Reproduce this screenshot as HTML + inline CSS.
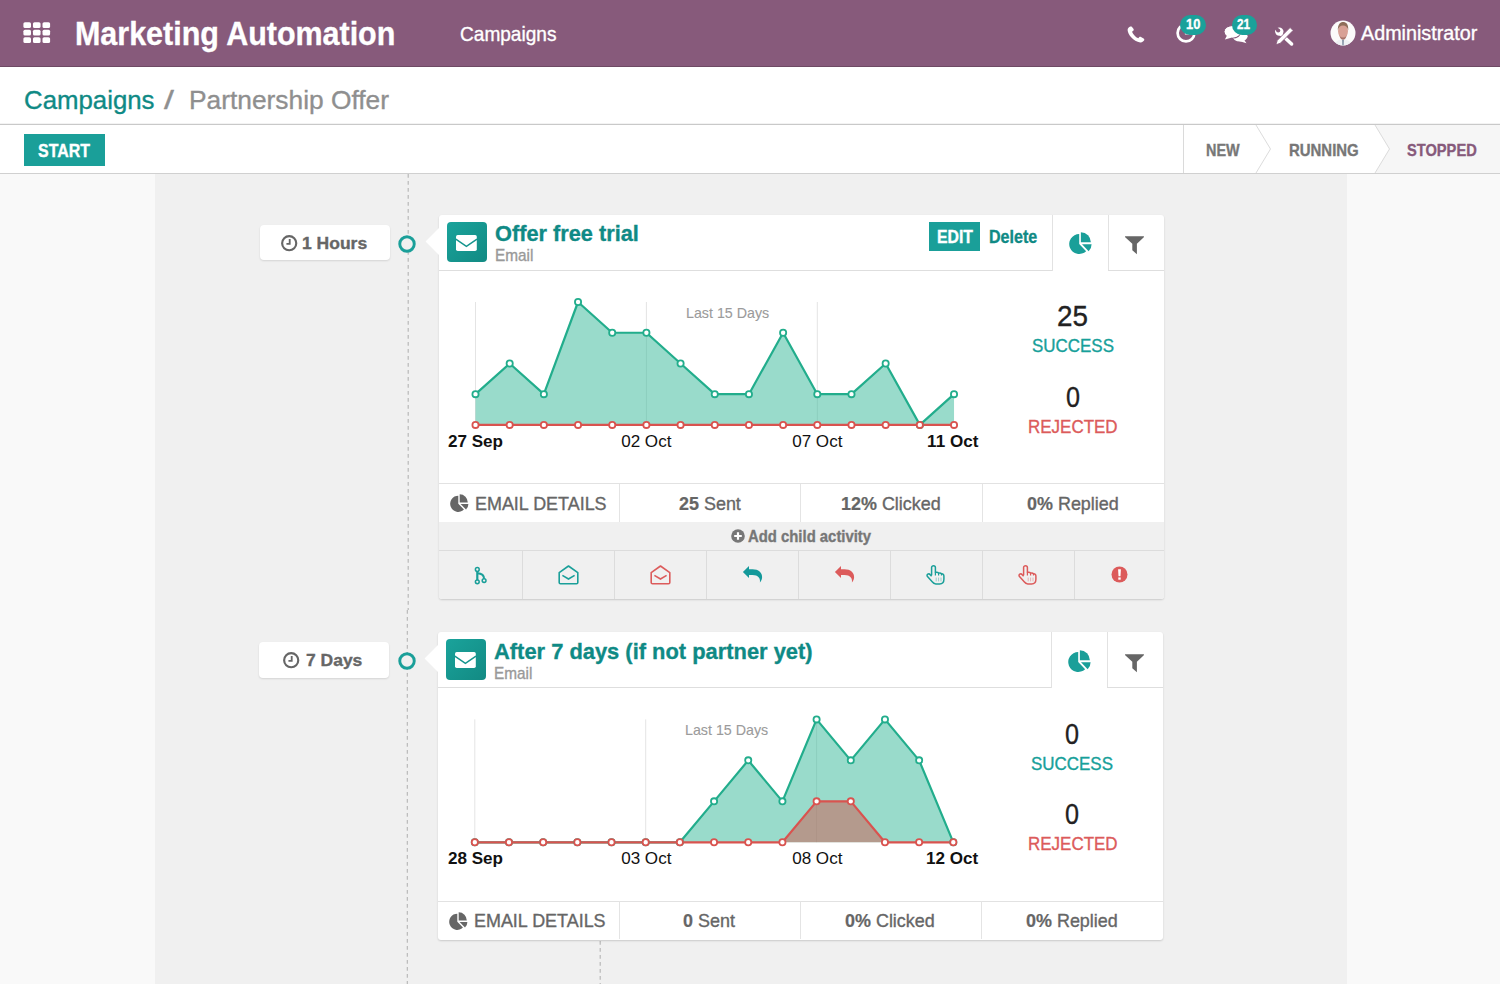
<!DOCTYPE html>
<html><head><meta charset="utf-8">
<style>
html,body{margin:0;padding:0;width:1500px;height:984px;overflow:hidden;background:#fff;}
body{position:relative;font-family:"Liberation Sans",sans-serif;}
.t{position:absolute;white-space:nowrap;-webkit-text-stroke:0.35px currentColor;}
.t b{-webkit-text-stroke:0.2px currentColor;}
.r{position:absolute;box-sizing:border-box;}
svg{position:absolute;overflow:visible;}
</style></head><body>

<div class="r" style="left:0.00px;top:0.00px;width:1500.00px;height:67.00px;background:#875a7b;border-bottom:1px solid #6e4a64;"></div>
<div class="r" style="left:0.00px;top:123.00px;width:1500.00px;height:1.00px;background:#f3f3f3;"></div>
<div class="r" style="left:0.00px;top:124.00px;width:1500.00px;height:1.00px;background:#c9c9c9;"></div>
<div class="r" style="left:0.00px;top:173.00px;width:1500.00px;height:1.00px;background:#d0d0d0;"></div>
<div class="r" style="left:0.00px;top:174.00px;width:1500.00px;height:810.00px;background:#f9f9f9;"></div>
<div class="r" style="left:155.00px;top:174.00px;width:1192.00px;height:810.00px;background:#f0f0f0;"></div>
<svg style="left:23px;top:21.5px" width="28" height="22" viewBox="0 0 28 22"><rect x="0.40" y="0.20" width="7.6" height="5.9" rx="1.6" fill="#fff"/><rect x="9.95" y="0.20" width="7.6" height="5.9" rx="1.6" fill="#fff"/><rect x="19.50" y="0.20" width="7.6" height="5.9" rx="1.6" fill="#fff"/><rect x="0.40" y="7.70" width="7.6" height="5.9" rx="1.6" fill="#fff"/><rect x="9.95" y="7.70" width="7.6" height="5.9" rx="1.6" fill="#fff"/><rect x="19.50" y="7.70" width="7.6" height="5.9" rx="1.6" fill="#fff"/><rect x="0.40" y="15.20" width="7.6" height="5.9" rx="1.6" fill="#fff"/><rect x="9.95" y="15.20" width="7.6" height="5.9" rx="1.6" fill="#fff"/><rect x="19.50" y="15.20" width="7.6" height="5.9" rx="1.6" fill="#fff"/></svg>
<div class="t" style="left:74.50px;top:17.20px;font-size:33.20px;line-height:33.20px;color:#fff;font-weight:bold;transform:scaleX(0.9176);transform-origin:0 0;">Marketing Automation</div>
<div class="t" style="left:459.50px;top:24.40px;font-size:20.20px;line-height:20.20px;color:#fff;font-weight:normal;transform:scaleX(0.9446);transform-origin:0 0;">Campaigns</div>
<svg style="left:1126.8px;top:25.5px" width="18" height="17" viewBox="0 0 18 17"><path d="M3.2 0.6 C2.2 0.9 0.6 2.2 0.6 4.1 C0.8 8.6 6.4 15.6 13.2 16.4 C15.2 16.6 16.9 15.1 17.3 14.0 C17.5 13.4 17.2 12.9 16.6 12.5 L14.0 10.9 C13.4 10.5 12.7 10.6 12.3 11.1 L11.3 12.3 C8.4 11.0 6.2 8.4 5.0 5.7 L6.3 4.7 C6.8 4.3 6.9 3.6 6.6 3.0 L5.0 0.9 C4.6 0.5 3.9 0.4 3.2 0.6 Z" fill="#fff"/></svg>
<svg style="left:1175px;top:22px" width="22" height="22" viewBox="0 0 22 22"><circle cx="11" cy="11" r="8.4" fill="none" stroke="#fff" stroke-width="2.7"/><path d="M11 6 V11.4 H14.5" fill="none" stroke="#fff" stroke-width="2.2"/></svg>
<div class="r" style="left:1180.00px;top:14.60px;width:26.00px;height:20.40px;background:#1aa19a;border-radius:10.2px;"></div>
<div class="t" style="left:1186.00px;top:17.45px;font-size:14.00px;line-height:14.00px;color:#fff;font-weight:bold;transform:scaleX(0.9181);transform-origin:0 0;">10</div>
<svg style="left:1224px;top:24px" width="25" height="20" viewBox="0 0 25 20"><ellipse cx="16" cy="12.2" rx="7.6" ry="5.4" fill="#fff"/><path d="M19.5 15 L22.5 19.2 L15 17 Z" fill="#fff"/><ellipse cx="8.5" cy="7.8" rx="8.4" ry="6.2" fill="#fff" stroke="#875a7b" stroke-width="1.1"/><path d="M3 11.5 L0.9 15.6 L8 13.5 Z" fill="#fff"/><ellipse cx="8.5" cy="7.8" rx="7.85" ry="5.65" fill="#fff"/></svg>
<div class="r" style="left:1232.00px;top:14.60px;width:25.00px;height:20.40px;background:#1aa19a;border-radius:10.2px;"></div>
<div class="t" style="left:1237.00px;top:17.45px;font-size:14.00px;line-height:14.00px;color:#fff;font-weight:bold;transform:scaleX(0.8347);transform-origin:0 0;">21</div>
<svg style="left:1270px;top:22px" width="30" height="28" viewBox="0 0 30 28"><path d="M9.8 11 L21.6 22" stroke="#fff" stroke-width="3.5" stroke-linecap="round"/><circle cx="9.3" cy="9.6" r="4.2" fill="#fff"/><circle cx="8.2" cy="8.5" r="2.1" fill="#875a7b"/><path d="M9 7.1 L4.4 2.5 L2.2 4.7 L6.8 9.3 Z" fill="#875a7b"/><path d="M5.8 22.8 L7.3 18.3 L20.1 5.5 L23.1 8.5 L10.3 21.3 Z" fill="#fff" stroke="#875a7b" stroke-width="0.9"/></svg>
<svg style="left:1330px;top:20px" width="26" height="26" viewBox="0 0 26 26"><defs><clipPath id="av"><circle cx="13" cy="13" r="12.5"/></clipPath></defs><circle cx="13" cy="13" r="12.5" fill="#fbfafa"/><g clip-path="url(#av)"><path d="M4 26 C5 21 9 19.5 13 19.5 C17 19.5 21 21 22 26 Z" fill="#eef0f3"/><path d="M9.2 15 C10 18.6 11.5 19.8 13 19.8 C14.6 19.8 16 18.6 16.8 15 Z" fill="#a8746a"/><ellipse cx="13" cy="11" rx="5" ry="6.6" fill="#d8a196"/><path d="M7.9 10.5 C7.4 4.5 10.4 2 13 2 C16 2 18.8 4 18.2 10.5 C17.6 7.4 15.8 5.6 13 5.6 C10.3 5.6 8.5 7.4 7.9 10.5 Z" fill="#8e6e5a"/><path d="M12 19.8 L14 19.8 L13.7 26 L12.3 26 Z" fill="#8a98aa"/></g></svg>
<div class="t" style="left:1360.80px;top:24.49px;font-size:19.50px;line-height:19.50px;color:#fff;font-weight:normal;transform:scaleX(1.0117);transform-origin:0 0;">Administrator</div>
<div class="t" style="left:24.40px;top:86.57px;font-size:26.50px;line-height:26.50px;color:#0f8a85;font-weight:normal;transform:scaleX(0.9737);transform-origin:0 0;">Campaigns</div>
<div class="t" style="left:164.00px;top:86.57px;font-size:26.50px;line-height:26.50px;color:#8f8f8f;font-weight:normal;transform:scaleX(1.3477);transform-origin:0 0;">/</div>
<div class="t" style="left:189.00px;top:86.57px;font-size:26.50px;line-height:26.50px;color:#8f8f8f;font-weight:normal;transform:scaleX(0.9934);transform-origin:0 0;">Partnership Offer</div>
<div class="r" style="left:24.00px;top:134.00px;width:81.00px;height:32.00px;background:#1a9f99;"></div>
<div class="t" style="left:38.00px;top:141.59px;font-size:18.20px;line-height:18.20px;color:#fff;font-weight:bold;transform:scaleX(0.8764);transform-origin:0 0;">START</div>
<svg style="left:1183px;top:125px" width="317" height="48" viewBox="0 0 317 48"><path d="M192 0 L317 0 L317 48 L192 48 L206 24 Z" fill="#f6f6f6"/><path d="M0.5 0 V48" stroke="#dadada" stroke-width="1"/><path d="M73 0 L87.5 24 L73 48" fill="none" stroke="#dcdcdc" stroke-width="1"/><path d="M192 0 L206.5 24 L192 48" fill="none" stroke="#dcdcdc" stroke-width="1"/></svg>
<div class="t" style="left:1206.30px;top:141.50px;font-size:16.30px;line-height:16.30px;color:#777;font-weight:bold;transform:scaleX(0.8854);transform-origin:0 0;">NEW</div>
<div class="t" style="left:1288.80px;top:141.50px;font-size:16.30px;line-height:16.30px;color:#777;font-weight:bold;transform:scaleX(0.9175);transform-origin:0 0;">RUNNING</div>
<div class="t" style="left:1407.20px;top:141.50px;font-size:16.30px;line-height:16.30px;color:#875a7b;font-weight:bold;transform:scaleX(0.8996);transform-origin:0 0;">STOPPED</div>
<svg style="left:0;top:0" width="1500" height="984"><path d="M408.2 174 V610" stroke="#b4b4b4" stroke-width="1.1" stroke-dasharray="3.8 3.2"/><path d="M407.3 610 V984" stroke="#b4b4b4" stroke-width="1.1" stroke-dasharray="3.8 3.2"/><path d="M600.2 941 V984" stroke="#b4b4b4" stroke-width="1.1" stroke-dasharray="3.8 3.2"/></svg>
<div class="r" style="left:260.00px;top:225.00px;width:130.00px;height:35.20px;background:#fff;border-radius:4px;box-shadow:0 1px 2px rgba(0,0,0,0.12);"></div>
<svg style="left:280.60px;top:234.90px" width="16.40" height="16.40" viewBox="0 0 16 16"><circle cx="8" cy="8" r="6.9" fill="none" stroke="#666" stroke-width="2.1"/><path d="M8.5 3.9 V8.6 H5.3" fill="none" stroke="#666" stroke-width="1.8"/></svg>
<div class="t" style="left:302.40px;top:234.56px;font-size:17.30px;line-height:17.30px;color:#666;font-weight:bold;transform:scaleX(1.0124);transform-origin:0 0;">1 Hours</div>
<svg style="left:397.30px;top:233.60px" width="20" height="20" viewBox="0 0 20 20"><circle cx="10" cy="10" r="7.25" fill="#f0f0f0" stroke="#1a9f99" stroke-width="2.9"/></svg>
<div class="r" style="left:439.00px;top:215.00px;width:725.00px;height:384.00px;background:#fff;border-radius:3px;box-shadow:0 1px 2px rgba(0,0,0,0.16);"></div>
<svg style="left:425.00px;top:228.00px" width="16" height="30" viewBox="0 0 16 30"><path d="M14 0 L0.6 13.5 L14 27 Z" fill="#fff"/></svg>
<div class="r" style="left:439.00px;top:269.60px;width:613.00px;height:1.00px;background:#dedede;"></div>
<div class="r" style="left:1052.00px;top:215.00px;width:1.00px;height:55.60px;background:#e2e2e2;"></div>
<div class="r" style="left:1108.00px;top:215.00px;width:1.00px;height:55.60px;background:#e2e2e2;"></div>
<div class="r" style="left:1108.00px;top:269.60px;width:56.00px;height:1.00px;background:#dedede;"></div>
<div class="r" style="left:447.00px;top:222.00px;width:40px;height:40.3px;border-radius:4px;background:linear-gradient(135deg,#1aa39b,#128a83);"></div><svg style="left:456.00px;top:234.80px" width="21" height="17" viewBox="0 0 21 17"><rect x="0" y="0" width="20.8" height="16" rx="1.7" fill="#fff"/><path d="M-0.2 4.2 L10.4 11.3 L21 4.2" fill="none" stroke="#16958e" stroke-width="1.5"/></svg>
<div class="t" style="left:494.50px;top:223.15px;font-size:22.50px;line-height:22.50px;color:#0f8a85;font-weight:bold;transform:scaleX(0.9665);transform-origin:0 0;">Offer free trial</div>
<div class="t" style="left:494.80px;top:247.19px;font-size:16.20px;line-height:16.20px;color:#999;font-weight:normal;transform:scaleX(0.9481);transform-origin:0 0;">Email</div>
<div class="r" style="left:929.30px;top:222.00px;width:51.00px;height:29.00px;background:#1a9f99;"></div>
<div class="t" style="left:937.00px;top:228.72px;font-size:17.70px;line-height:17.70px;color:#fff;font-weight:bold;transform:scaleX(0.8930);transform-origin:0 0;">EDIT</div>
<div class="t" style="left:988.70px;top:228.72px;font-size:17.70px;line-height:17.70px;color:#0f8a85;font-weight:bold;transform:scaleX(0.9070);transform-origin:0 0;">Delete</div>
<svg style="left:1069.00px;top:232.40px" width="22.00" height="22.00" viewBox="0 0 22 22"><path d="M10.2 12 L10.2 2 A10 10 0 1 0 17.15 19.2 Z" fill="#1a9f99"/><path d="M11.9 10.3 V0.3 A10 10 0 0 1 21.9 10.3 Z" fill="#1a9f99"/><path d="M13 12.3 H22.6 A9.6 9.6 0 0 1 19.67 19.2 Z" fill="#1a9f99"/></svg>
<svg style="left:1125.40px;top:236.20px" width="20" height="19" viewBox="0 0 20 19"><path d="M0.6 0.2 H18.4 C19 0.2 19.2 0.8 18.8 1.2 L11.9 7.8 V18.2 L7.3 14.2 V7.8 L0.2 1.2 C-0.2 0.8 0 0.2 0.6 0.2 Z" fill="#666"/></svg>
<svg style="left:0;top:0" width="1500" height="984"><path d="M475.50 302.00 V424.90" stroke="#e4e4e4" stroke-width="1"/><path d="M646.40 302.00 V424.90" stroke="#e4e4e4" stroke-width="1"/><path d="M817.30 302.00 V424.90" stroke="#e4e4e4" stroke-width="1"/><polygon points="475.50,394.17 509.68,363.45 543.86,394.17 578.04,302.00 612.22,332.73 646.40,332.73 680.58,363.45 714.76,394.17 748.94,394.17 783.12,332.73 817.30,394.17 851.48,394.17 885.66,363.45 919.84,424.90 954.02,394.17 954.02,424.90 475.50,424.90" fill="rgba(52,183,152,0.5)"/><polygon points="475.50,424.90 509.68,424.90 543.86,424.90 578.04,424.90 612.22,424.90 646.40,424.90 680.58,424.90 714.76,424.90 748.94,424.90 783.12,424.90 817.30,424.90 851.48,424.90 885.66,424.90 919.84,424.90 954.02,424.90 954.02,424.90 475.50,424.90" fill="rgba(207,90,80,0.5)"/><polyline points="475.50,394.17 509.68,363.45 543.86,394.17 578.04,302.00 612.22,332.73 646.40,332.73 680.58,363.45 714.76,394.17 748.94,394.17 783.12,332.73 817.30,394.17 851.48,394.17 885.66,363.45 919.84,424.90 954.02,394.17" fill="none" stroke="#22ad8c" stroke-width="2.2" stroke-linejoin="round"/><polyline points="475.50,424.90 509.68,424.90 543.86,424.90 578.04,424.90 612.22,424.90 646.40,424.90 680.58,424.90 714.76,424.90 748.94,424.90 783.12,424.90 817.30,424.90 851.48,424.90 885.66,424.90 919.84,424.90 954.02,424.90" fill="none" stroke="#d9534f" stroke-width="2.2" stroke-linejoin="round"/><circle cx="475.50" cy="394.17" r="3.1" fill="#fff" stroke="#22ad8c" stroke-width="1.8"/><circle cx="509.68" cy="363.45" r="3.1" fill="#fff" stroke="#22ad8c" stroke-width="1.8"/><circle cx="543.86" cy="394.17" r="3.1" fill="#fff" stroke="#22ad8c" stroke-width="1.8"/><circle cx="578.04" cy="302.00" r="3.1" fill="#fff" stroke="#22ad8c" stroke-width="1.8"/><circle cx="612.22" cy="332.73" r="3.1" fill="#fff" stroke="#22ad8c" stroke-width="1.8"/><circle cx="646.40" cy="332.73" r="3.1" fill="#fff" stroke="#22ad8c" stroke-width="1.8"/><circle cx="680.58" cy="363.45" r="3.1" fill="#fff" stroke="#22ad8c" stroke-width="1.8"/><circle cx="714.76" cy="394.17" r="3.1" fill="#fff" stroke="#22ad8c" stroke-width="1.8"/><circle cx="748.94" cy="394.17" r="3.1" fill="#fff" stroke="#22ad8c" stroke-width="1.8"/><circle cx="783.12" cy="332.73" r="3.1" fill="#fff" stroke="#22ad8c" stroke-width="1.8"/><circle cx="817.30" cy="394.17" r="3.1" fill="#fff" stroke="#22ad8c" stroke-width="1.8"/><circle cx="851.48" cy="394.17" r="3.1" fill="#fff" stroke="#22ad8c" stroke-width="1.8"/><circle cx="885.66" cy="363.45" r="3.1" fill="#fff" stroke="#22ad8c" stroke-width="1.8"/><circle cx="919.84" cy="424.90" r="3.1" fill="#fff" stroke="#22ad8c" stroke-width="1.8"/><circle cx="954.02" cy="394.17" r="3.1" fill="#fff" stroke="#22ad8c" stroke-width="1.8"/><circle cx="475.50" cy="424.90" r="3.1" fill="#fff" stroke="#d9534f" stroke-width="1.8"/><circle cx="509.68" cy="424.90" r="3.1" fill="#fff" stroke="#d9534f" stroke-width="1.8"/><circle cx="543.86" cy="424.90" r="3.1" fill="#fff" stroke="#d9534f" stroke-width="1.8"/><circle cx="578.04" cy="424.90" r="3.1" fill="#fff" stroke="#d9534f" stroke-width="1.8"/><circle cx="612.22" cy="424.90" r="3.1" fill="#fff" stroke="#d9534f" stroke-width="1.8"/><circle cx="646.40" cy="424.90" r="3.1" fill="#fff" stroke="#d9534f" stroke-width="1.8"/><circle cx="680.58" cy="424.90" r="3.1" fill="#fff" stroke="#d9534f" stroke-width="1.8"/><circle cx="714.76" cy="424.90" r="3.1" fill="#fff" stroke="#d9534f" stroke-width="1.8"/><circle cx="748.94" cy="424.90" r="3.1" fill="#fff" stroke="#d9534f" stroke-width="1.8"/><circle cx="783.12" cy="424.90" r="3.1" fill="#fff" stroke="#d9534f" stroke-width="1.8"/><circle cx="817.30" cy="424.90" r="3.1" fill="#fff" stroke="#d9534f" stroke-width="1.8"/><circle cx="851.48" cy="424.90" r="3.1" fill="#fff" stroke="#d9534f" stroke-width="1.8"/><circle cx="885.66" cy="424.90" r="3.1" fill="#fff" stroke="#d9534f" stroke-width="1.8"/><circle cx="919.84" cy="424.90" r="3.1" fill="#fff" stroke="#d9534f" stroke-width="1.8"/><circle cx="954.02" cy="424.90" r="3.1" fill="#fff" stroke="#d9534f" stroke-width="1.8"/></svg>
<div class="t" style="left:685.90px;top:305.71px;font-size:14.40px;line-height:14.40px;color:#9b9b9b;font-weight:normal;transform:scaleX(0.9898);transform-origin:0 0;-webkit-text-stroke:0.1px #9b9b9b;">Last 15 Days</div>
<div class="t" style="left:450.32px;top:433.63px;font-size:15.80px;line-height:15.80px;color:#111;font-weight:bold;transform:scaleX(1.08);transform-origin:50% 0;-webkit-text-stroke:0;">27 Sep</div>
<div class="t" style="left:623.43px;top:433.63px;font-size:15.80px;line-height:15.80px;color:#111;font-weight:normal;transform:scaleX(1.08);transform-origin:50% 0;-webkit-text-stroke:0;">02 Oct</div>
<div class="t" style="left:794.33px;top:433.63px;font-size:15.80px;line-height:15.80px;color:#111;font-weight:normal;transform:scaleX(1.08);transform-origin:50% 0;-webkit-text-stroke:0;">07 Oct</div>
<div class="t" style="left:929.30px;top:433.63px;font-size:15.80px;line-height:15.80px;color:#111;font-weight:bold;transform:scaleX(1.08);transform-origin:50% 0;-webkit-text-stroke:0;">11 Oct</div>
<div class="t" style="left:1057.00px;top:301.14px;font-size:30.20px;line-height:30.20px;color:#222;font-weight:normal;transform:scaleX(0.9227);transform-origin:0 0;">25</div>
<div class="t" style="left:1032.00px;top:338.25px;font-size:17.90px;line-height:17.90px;color:#17a09a;font-weight:normal;transform:scaleX(0.9475);transform-origin:0 0;">SUCCESS</div>
<div class="t" style="left:1066.00px;top:381.84px;font-size:30.20px;line-height:30.20px;color:#222;font-weight:normal;transform:scaleX(0.8353);transform-origin:0 0;">0</div>
<div class="t" style="left:1028.40px;top:418.95px;font-size:17.90px;line-height:17.90px;color:#dc5b5b;font-weight:normal;transform:scaleX(0.9485);transform-origin:0 0;">REJECTED</div>
<div class="r" style="left:439.00px;top:483.40px;width:725.00px;height:1.00px;background:#e2e2e2;"></div>
<div class="r" style="left:619.20px;top:484.00px;width:1.00px;height:38.00px;background:#e4e4e4;"></div>
<div class="r" style="left:800.30px;top:484.00px;width:1.00px;height:38.00px;background:#e4e4e4;"></div>
<div class="r" style="left:982.00px;top:484.00px;width:1.00px;height:38.00px;background:#e4e4e4;"></div>
<svg style="left:450.00px;top:494.40px" width="17.90" height="17.90" viewBox="0 0 22 22"><path d="M10.2 12 L10.2 2 A10 10 0 1 0 17.15 19.2 Z" fill="#666"/><path d="M11.9 10.3 V0.3 A10 10 0 0 1 21.9 10.3 Z" fill="#666"/><path d="M13 12.3 H22.6 A9.6 9.6 0 0 1 19.67 19.2 Z" fill="#666"/></svg>
<div class="t" style="left:474.80px;top:494.66px;font-size:18.60px;line-height:18.60px;color:#666;font-weight:normal;transform:scaleX(0.9646);transform-origin:0 0;">EMAIL DETAILS</div>
<div class="t" style="left:678.66px;top:494.56px;font-size:18.60px;line-height:18.60px;color:#666;font-weight:normal;transform:scaleX(0.9650);transform-origin:0 0;"><b>25</b> Sent</div>
<div class="t" style="left:841.11px;top:494.56px;font-size:18.60px;line-height:18.60px;color:#666;font-weight:normal;transform:scaleX(0.9650);transform-origin:0 0;"><b>12%</b> Clicked</div>
<div class="t" style="left:1026.59px;top:494.56px;font-size:18.60px;line-height:18.60px;color:#666;font-weight:normal;transform:scaleX(0.9650);transform-origin:0 0;"><b>0%</b> Replied</div>
<div class="r" style="left:439.00px;top:522.00px;width:725.00px;height:77.00px;background:#f0f0f0;border-radius:0 0 3px 3px;"></div>
<div class="r" style="left:439.00px;top:550.00px;width:725.00px;height:1.00px;background:#dcdcdc;"></div>
<svg style="left:730.50px;top:529.40px" width="14" height="14" viewBox="0 0 14 14"><circle cx="7" cy="7" r="6.8" fill="#777"/><path d="M7 3.2 V10.8 M3.2 7 H10.8" stroke="#fff" stroke-width="2.2"/></svg>
<div class="t" style="left:748.30px;top:528.53px;font-size:15.80px;line-height:15.80px;color:#777;font-weight:bold;transform:scaleX(0.9410);transform-origin:0 0;">Add child activity</div>
<div class="r" style="left:521.50px;top:551.00px;width:1.00px;height:48.00px;background:#dcdcdc;"></div>
<div class="r" style="left:614.00px;top:551.00px;width:1.00px;height:48.00px;background:#dcdcdc;"></div>
<div class="r" style="left:706.40px;top:551.00px;width:1.00px;height:48.00px;background:#dcdcdc;"></div>
<div class="r" style="left:798.00px;top:551.00px;width:1.00px;height:48.00px;background:#dcdcdc;"></div>
<div class="r" style="left:890.40px;top:551.00px;width:1.00px;height:48.00px;background:#dcdcdc;"></div>
<div class="r" style="left:982.00px;top:551.00px;width:1.00px;height:48.00px;background:#dcdcdc;"></div>
<div class="r" style="left:1074.00px;top:551.00px;width:1.00px;height:48.00px;background:#dcdcdc;"></div>
<svg style="left:474.00px;top:566.50px" width="13" height="18" viewBox="0 0 13 18"><path d="M3.3 4 V13" stroke="#1a9f99" stroke-width="2.2" fill="none"/><path d="M3.3 6.2 C7.6 6.4 10.1 8.6 10.1 11.8" stroke="#1a9f99" stroke-width="2" fill="none"/><circle cx="3.3" cy="2.5" r="1.9" fill="#f0f0f0" stroke="#1a9f99" stroke-width="1.5"/><circle cx="3.3" cy="14.8" r="1.9" fill="#f0f0f0" stroke="#1a9f99" stroke-width="1.5"/><circle cx="10.1" cy="13.6" r="1.9" fill="#f0f0f0" stroke="#1a9f99" stroke-width="1.5"/></svg>
<svg style="left:558.00px;top:564.50px" width="21" height="20" viewBox="0 0 21 20"><path d="M1.2 7.6 L10.5 1 L19.8 7.6 V17.4 C19.8 18.2 19.3 18.7 18.5 18.7 H2.5 C1.7 18.7 1.2 18.2 1.2 17.4 Z" fill="none" stroke="#1a9f99" stroke-width="1.6" stroke-linejoin="round"/><path d="M4.4 10.4 L10.5 14 L16.6 10.4" fill="none" stroke="#1a9f99" stroke-width="1.6"/></svg>
<svg style="left:650.00px;top:564.50px" width="21" height="20" viewBox="0 0 21 20"><path d="M1.2 7.6 L10.5 1 L19.8 7.6 V17.4 C19.8 18.2 19.3 18.7 18.5 18.7 H2.5 C1.7 18.7 1.2 18.2 1.2 17.4 Z" fill="none" stroke="#dc5b5b" stroke-width="1.6" stroke-linejoin="round"/><path d="M4.4 10.4 L10.5 14 L16.6 10.4" fill="none" stroke="#dc5b5b" stroke-width="1.6"/></svg>
<svg style="left:742.00px;top:565.00px" width="22" height="19" viewBox="0 0 22 19"><path d="M0.9 7 L7 1.1 V4.2 H10.5 C16.5 4.2 20.3 7.5 20.1 12.2 C20 14.5 19 16.3 17.9 17.6 C18.8 13.2 16 9.9 10.5 9.9 H7 V12.9 Z" fill="#14999a"/></svg>
<svg style="left:834.00px;top:565.00px" width="22" height="19" viewBox="0 0 22 19"><path d="M0.9 7 L7 1.1 V4.2 H10.5 C16.5 4.2 20.3 7.5 20.1 12.2 C20 14.5 19 16.3 17.9 17.6 C18.8 13.2 16 9.9 10.5 9.9 H7 V12.9 Z" fill="#dc5b5b"/></svg>
<svg style="left:926.00px;top:565.00px" width="19" height="20" viewBox="0 0 19 20"><path d="M5.6 10.2 V2.6 C5.6 1.4 6.5 0.7 7.5 0.7 C8.5 0.7 9.4 1.4 9.4 2.6 V7.4 C10.8 7.1 12 7.4 12.6 8.1 C13.8 7.7 15 8.1 15.5 8.9 C16.9 8.7 17.9 9.5 17.9 10.9 V14.2 C17.9 16.8 16.4 18.9 13.6 18.9 H9.8 C8.2 18.9 7.2 18.2 6.2 16.8 L1.5 11.5 C0.8 10.7 0.9 9.7 1.7 9.2 C2.5 8.7 3.6 8.9 4.2 9.7 L5.6 11.2" fill="none" stroke="#1a9f99" stroke-width="1.5" stroke-linejoin="round"/><path d="M12.6 8.1 V10.4 M15.5 8.9 V10.6 M9.4 7.4 V10.4" stroke="#1a9f99" stroke-width="1.2"/><path d="M10.2 12.6 V16.4 M12.6 12.6 V16.4 M15 12.6 V16.4" stroke="#1a9f99" stroke-width="0.9" opacity="0.45"/></svg>
<svg style="left:1018.00px;top:565.00px" width="19" height="20" viewBox="0 0 19 20"><path d="M5.6 10.2 V2.6 C5.6 1.4 6.5 0.7 7.5 0.7 C8.5 0.7 9.4 1.4 9.4 2.6 V7.4 C10.8 7.1 12 7.4 12.6 8.1 C13.8 7.7 15 8.1 15.5 8.9 C16.9 8.7 17.9 9.5 17.9 10.9 V14.2 C17.9 16.8 16.4 18.9 13.6 18.9 H9.8 C8.2 18.9 7.2 18.2 6.2 16.8 L1.5 11.5 C0.8 10.7 0.9 9.7 1.7 9.2 C2.5 8.7 3.6 8.9 4.2 9.7 L5.6 11.2" fill="none" stroke="#dc5b5b" stroke-width="1.5" stroke-linejoin="round"/><path d="M12.6 8.1 V10.4 M15.5 8.9 V10.6 M9.4 7.4 V10.4" stroke="#dc5b5b" stroke-width="1.2"/><path d="M10.2 12.6 V16.4 M12.6 12.6 V16.4 M15 12.6 V16.4" stroke="#dc5b5b" stroke-width="0.9" opacity="0.45"/></svg>
<svg style="left:1110.50px;top:566.00px" width="17" height="17" viewBox="0 0 17 17"><circle cx="8.5" cy="8.5" r="8" fill="#dc5b5b"/><path d="M7.1 3.2 H9.9 L9.5 10.2 H7.5 Z" fill="#fff"/><rect x="7.3" y="11.4" width="2.4" height="2.3" fill="#fff"/></svg>
<div class="r" style="left:259.30px;top:642.40px;width:130.00px;height:35.20px;background:#fff;border-radius:4px;box-shadow:0 1px 2px rgba(0,0,0,0.12);"></div>
<svg style="left:283.40px;top:652.30px" width="16.40" height="16.40" viewBox="0 0 16 16"><circle cx="8" cy="8" r="6.9" fill="none" stroke="#666" stroke-width="2.1"/><path d="M8.5 3.9 V8.6 H5.3" fill="none" stroke="#666" stroke-width="1.8"/></svg>
<div class="t" style="left:305.60px;top:651.96px;font-size:17.30px;line-height:17.30px;color:#666;font-weight:bold;transform:scaleX(1.0109);transform-origin:0 0;">7 Days</div>
<svg style="left:396.60px;top:651.00px" width="20" height="20" viewBox="0 0 20 20"><circle cx="10" cy="10" r="7.25" fill="#f0f0f0" stroke="#1a9f99" stroke-width="2.9"/></svg>
<div class="r" style="left:438.30px;top:632.40px;width:725.00px;height:307.20px;background:#fff;border-radius:3px;box-shadow:0 1px 2px rgba(0,0,0,0.16);"></div>
<svg style="left:424.30px;top:645.40px" width="16" height="30" viewBox="0 0 16 30"><path d="M14 0 L0.6 13.5 L14 27 Z" fill="#fff"/></svg>
<div class="r" style="left:438.30px;top:687.00px;width:613.00px;height:1.00px;background:#dedede;"></div>
<div class="r" style="left:1051.30px;top:632.40px;width:1.00px;height:55.60px;background:#e2e2e2;"></div>
<div class="r" style="left:1107.30px;top:632.40px;width:1.00px;height:55.60px;background:#e2e2e2;"></div>
<div class="r" style="left:1107.30px;top:687.00px;width:56.00px;height:1.00px;background:#dedede;"></div>
<div class="r" style="left:446.30px;top:639.40px;width:40px;height:40.3px;border-radius:4px;background:linear-gradient(135deg,#1aa39b,#128a83);"></div><svg style="left:455.30px;top:652.20px" width="21" height="17" viewBox="0 0 21 17"><rect x="0" y="0" width="20.8" height="16" rx="1.7" fill="#fff"/><path d="M-0.2 4.2 L10.4 11.3 L21 4.2" fill="none" stroke="#16958e" stroke-width="1.5"/></svg>
<div class="t" style="left:493.80px;top:640.55px;font-size:22.50px;line-height:22.50px;color:#0f8a85;font-weight:bold;transform:scaleX(0.9727);transform-origin:0 0;">After 7 days (if not partner yet)</div>
<div class="t" style="left:494.10px;top:664.59px;font-size:16.20px;line-height:16.20px;color:#999;font-weight:normal;transform:scaleX(0.9481);transform-origin:0 0;">Email</div>
<svg style="left:1068.30px;top:649.80px" width="22.00" height="22.00" viewBox="0 0 22 22"><path d="M10.2 12 L10.2 2 A10 10 0 1 0 17.15 19.2 Z" fill="#1a9f99"/><path d="M11.9 10.3 V0.3 A10 10 0 0 1 21.9 10.3 Z" fill="#1a9f99"/><path d="M13 12.3 H22.6 A9.6 9.6 0 0 1 19.67 19.2 Z" fill="#1a9f99"/></svg>
<svg style="left:1124.70px;top:653.60px" width="20" height="19" viewBox="0 0 20 19"><path d="M0.6 0.2 H18.4 C19 0.2 19.2 0.8 18.8 1.2 L11.9 7.8 V18.2 L7.3 14.2 V7.8 L0.2 1.2 C-0.2 0.8 0 0.2 0.6 0.2 Z" fill="#666"/></svg>
<svg style="left:0;top:0" width="1500" height="984"><path d="M474.80 719.40 V842.30" stroke="#e4e4e4" stroke-width="1"/><path d="M645.70 719.40 V842.30" stroke="#e4e4e4" stroke-width="1"/><path d="M816.60 719.40 V842.30" stroke="#e4e4e4" stroke-width="1"/><polygon points="474.80,842.30 508.98,842.30 543.16,842.30 577.34,842.30 611.52,842.30 645.70,842.30 679.88,842.30 714.06,801.33 748.24,760.37 782.42,801.33 816.60,719.40 850.78,760.37 884.96,719.40 919.14,760.37 953.32,842.30 953.32,842.30 474.80,842.30" fill="rgba(52,183,152,0.5)"/><polygon points="474.80,842.30 508.98,842.30 543.16,842.30 577.34,842.30 611.52,842.30 645.70,842.30 679.88,842.30 714.06,842.30 748.24,842.30 782.42,842.30 816.60,801.33 850.78,801.33 884.96,842.30 919.14,842.30 953.32,842.30 953.32,842.30 474.80,842.30" fill="rgba(207,90,80,0.5)"/><polyline points="474.80,842.30 508.98,842.30 543.16,842.30 577.34,842.30 611.52,842.30 645.70,842.30 679.88,842.30 714.06,801.33 748.24,760.37 782.42,801.33 816.60,719.40 850.78,760.37 884.96,719.40 919.14,760.37 953.32,842.30" fill="none" stroke="#22ad8c" stroke-width="2.2" stroke-linejoin="round"/><polyline points="474.80,842.30 508.98,842.30 543.16,842.30 577.34,842.30 611.52,842.30 645.70,842.30 679.88,842.30 714.06,842.30 748.24,842.30 782.42,842.30 816.60,801.33 850.78,801.33 884.96,842.30 919.14,842.30 953.32,842.30" fill="none" stroke="#d9534f" stroke-width="2.2" stroke-linejoin="round"/><circle cx="474.80" cy="842.30" r="3.1" fill="#fff" stroke="#22ad8c" stroke-width="1.8"/><circle cx="508.98" cy="842.30" r="3.1" fill="#fff" stroke="#22ad8c" stroke-width="1.8"/><circle cx="543.16" cy="842.30" r="3.1" fill="#fff" stroke="#22ad8c" stroke-width="1.8"/><circle cx="577.34" cy="842.30" r="3.1" fill="#fff" stroke="#22ad8c" stroke-width="1.8"/><circle cx="611.52" cy="842.30" r="3.1" fill="#fff" stroke="#22ad8c" stroke-width="1.8"/><circle cx="645.70" cy="842.30" r="3.1" fill="#fff" stroke="#22ad8c" stroke-width="1.8"/><circle cx="679.88" cy="842.30" r="3.1" fill="#fff" stroke="#22ad8c" stroke-width="1.8"/><circle cx="714.06" cy="801.33" r="3.1" fill="#fff" stroke="#22ad8c" stroke-width="1.8"/><circle cx="748.24" cy="760.37" r="3.1" fill="#fff" stroke="#22ad8c" stroke-width="1.8"/><circle cx="782.42" cy="801.33" r="3.1" fill="#fff" stroke="#22ad8c" stroke-width="1.8"/><circle cx="816.60" cy="719.40" r="3.1" fill="#fff" stroke="#22ad8c" stroke-width="1.8"/><circle cx="850.78" cy="760.37" r="3.1" fill="#fff" stroke="#22ad8c" stroke-width="1.8"/><circle cx="884.96" cy="719.40" r="3.1" fill="#fff" stroke="#22ad8c" stroke-width="1.8"/><circle cx="919.14" cy="760.37" r="3.1" fill="#fff" stroke="#22ad8c" stroke-width="1.8"/><circle cx="953.32" cy="842.30" r="3.1" fill="#fff" stroke="#22ad8c" stroke-width="1.8"/><circle cx="474.80" cy="842.30" r="3.1" fill="#fff" stroke="#d9534f" stroke-width="1.8"/><circle cx="508.98" cy="842.30" r="3.1" fill="#fff" stroke="#d9534f" stroke-width="1.8"/><circle cx="543.16" cy="842.30" r="3.1" fill="#fff" stroke="#d9534f" stroke-width="1.8"/><circle cx="577.34" cy="842.30" r="3.1" fill="#fff" stroke="#d9534f" stroke-width="1.8"/><circle cx="611.52" cy="842.30" r="3.1" fill="#fff" stroke="#d9534f" stroke-width="1.8"/><circle cx="645.70" cy="842.30" r="3.1" fill="#fff" stroke="#d9534f" stroke-width="1.8"/><circle cx="679.88" cy="842.30" r="3.1" fill="#fff" stroke="#d9534f" stroke-width="1.8"/><circle cx="714.06" cy="842.30" r="3.1" fill="#fff" stroke="#d9534f" stroke-width="1.8"/><circle cx="748.24" cy="842.30" r="3.1" fill="#fff" stroke="#d9534f" stroke-width="1.8"/><circle cx="782.42" cy="842.30" r="3.1" fill="#fff" stroke="#d9534f" stroke-width="1.8"/><circle cx="816.60" cy="801.33" r="3.1" fill="#fff" stroke="#d9534f" stroke-width="1.8"/><circle cx="850.78" cy="801.33" r="3.1" fill="#fff" stroke="#d9534f" stroke-width="1.8"/><circle cx="884.96" cy="842.30" r="3.1" fill="#fff" stroke="#d9534f" stroke-width="1.8"/><circle cx="919.14" cy="842.30" r="3.1" fill="#fff" stroke="#d9534f" stroke-width="1.8"/><circle cx="953.32" cy="842.30" r="3.1" fill="#fff" stroke="#d9534f" stroke-width="1.8"/></svg>
<div class="t" style="left:685.20px;top:723.11px;font-size:14.40px;line-height:14.40px;color:#9b9b9b;font-weight:normal;transform:scaleX(0.9898);transform-origin:0 0;-webkit-text-stroke:0.1px #9b9b9b;">Last 15 Days</div>
<div class="t" style="left:449.62px;top:851.03px;font-size:15.80px;line-height:15.80px;color:#111;font-weight:bold;transform:scaleX(1.08);transform-origin:50% 0;-webkit-text-stroke:0;">28 Sep</div>
<div class="t" style="left:622.73px;top:851.03px;font-size:15.80px;line-height:15.80px;color:#111;font-weight:normal;transform:scaleX(1.08);transform-origin:50% 0;-webkit-text-stroke:0;">03 Oct</div>
<div class="t" style="left:793.63px;top:851.03px;font-size:15.80px;line-height:15.80px;color:#111;font-weight:normal;transform:scaleX(1.08);transform-origin:50% 0;-webkit-text-stroke:0;">08 Oct</div>
<div class="t" style="left:928.17px;top:851.03px;font-size:15.80px;line-height:15.80px;color:#111;font-weight:bold;transform:scaleX(1.08);transform-origin:50% 0;-webkit-text-stroke:0;">12 Oct</div>
<div class="t" style="left:1064.80px;top:718.54px;font-size:30.20px;line-height:30.20px;color:#222;font-weight:normal;transform:scaleX(0.8353);transform-origin:0 0;">0</div>
<div class="t" style="left:1031.30px;top:755.65px;font-size:17.90px;line-height:17.90px;color:#17a09a;font-weight:normal;transform:scaleX(0.9475);transform-origin:0 0;">SUCCESS</div>
<div class="t" style="left:1065.30px;top:799.24px;font-size:30.20px;line-height:30.20px;color:#222;font-weight:normal;transform:scaleX(0.8353);transform-origin:0 0;">0</div>
<div class="t" style="left:1027.70px;top:836.35px;font-size:17.90px;line-height:17.90px;color:#dc5b5b;font-weight:normal;transform:scaleX(0.9485);transform-origin:0 0;">REJECTED</div>
<div class="r" style="left:438.30px;top:900.80px;width:725.00px;height:1.00px;background:#e2e2e2;"></div>
<div class="r" style="left:618.50px;top:901.40px;width:1.00px;height:38.00px;background:#e4e4e4;"></div>
<div class="r" style="left:799.60px;top:901.40px;width:1.00px;height:38.00px;background:#e4e4e4;"></div>
<div class="r" style="left:981.30px;top:901.40px;width:1.00px;height:38.00px;background:#e4e4e4;"></div>
<svg style="left:449.30px;top:911.80px" width="17.90" height="17.90" viewBox="0 0 22 22"><path d="M10.2 12 L10.2 2 A10 10 0 1 0 17.15 19.2 Z" fill="#666"/><path d="M11.9 10.3 V0.3 A10 10 0 0 1 21.9 10.3 Z" fill="#666"/><path d="M13 12.3 H22.6 A9.6 9.6 0 0 1 19.67 19.2 Z" fill="#666"/></svg>
<div class="t" style="left:474.10px;top:912.06px;font-size:18.60px;line-height:18.60px;color:#666;font-weight:normal;transform:scaleX(0.9646);transform-origin:0 0;">EMAIL DETAILS</div>
<div class="t" style="left:682.95px;top:911.96px;font-size:18.60px;line-height:18.60px;color:#666;font-weight:normal;transform:scaleX(0.9650);transform-origin:0 0;"><b>0</b> Sent</div>
<div class="t" style="left:845.40px;top:911.96px;font-size:18.60px;line-height:18.60px;color:#666;font-weight:normal;transform:scaleX(0.9650);transform-origin:0 0;"><b>0%</b> Clicked</div>
<div class="t" style="left:1025.89px;top:911.96px;font-size:18.60px;line-height:18.60px;color:#666;font-weight:normal;transform:scaleX(0.9650);transform-origin:0 0;"><b>0%</b> Replied</div>
</body></html>
